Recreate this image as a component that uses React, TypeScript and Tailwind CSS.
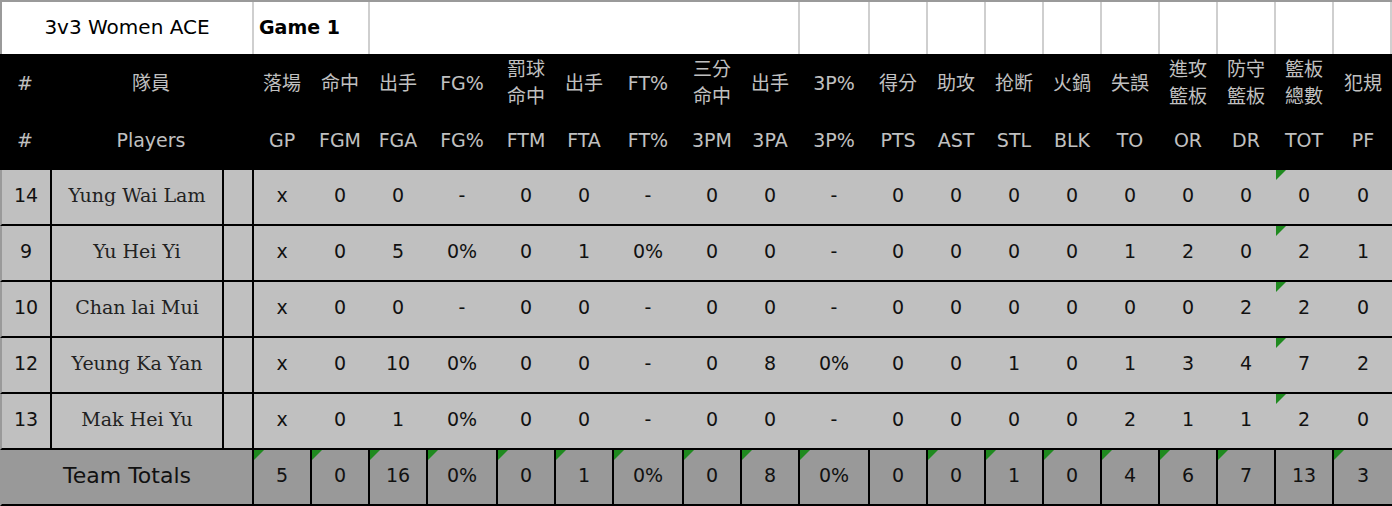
import React from "react";

type Col = { zh: string | string[]; en: string; w: string };

const cols: Col[] = [
  { zh: "落場", en: "GP", w: "w-[58px]" },
  { zh: "命中", en: "FGM", w: "w-[58px]" },
  { zh: "出手", en: "FGA", w: "w-[58px]" },
  { zh: "FG%", en: "FG%", w: "w-[70px]" },
  { zh: ["罰球", "命中"], en: "FTM", w: "w-[58px]" },
  { zh: "出手", en: "FTA", w: "w-[58px]" },
  { zh: "FT%", en: "FT%", w: "w-[70px]" },
  { zh: ["三分", "命中"], en: "3PM", w: "w-[58px]" },
  { zh: "出手", en: "3PA", w: "w-[58px]" },
  { zh: "3P%", en: "3P%", w: "w-[70px]" },
  { zh: "得分", en: "PTS", w: "w-[58px]" },
  { zh: "助攻", en: "AST", w: "w-[58px]" },
  { zh: "抢断", en: "STL", w: "w-[58px]" },
  { zh: "火鍋", en: "BLK", w: "w-[58px]" },
  { zh: "失誤", en: "TO", w: "w-[58px]" },
  { zh: ["進攻", "籃板"], en: "OR", w: "w-[58px]" },
  { zh: ["防守", "籃板"], en: "DR", w: "w-[58px]" },
  { zh: ["籃板", "總數"], en: "TOT", w: "w-[58px]" },
  { zh: "犯規", en: "PF", w: "w-[60px]" },
];

const players: { no: string; name: string; stats: string[] }[] = [
  { no: "14", name: "Yung Wai Lam", stats: ["x", "0", "0", "-", "0", "0", "-", "0", "0", "-", "0", "0", "0", "0", "0", "0", "0", "0", "0"] },
  { no: "9", name: "Yu Hei Yi", stats: ["x", "0", "5", "0%", "0", "1", "0%", "0", "0", "-", "0", "0", "0", "0", "1", "2", "0", "2", "1"] },
  { no: "10", name: "Chan lai Mui", stats: ["x", "0", "0", "-", "0", "0", "-", "0", "0", "-", "0", "0", "0", "0", "0", "0", "2", "2", "0"] },
  { no: "12", name: "Yeung Ka Yan", stats: ["x", "0", "10", "0%", "0", "0", "-", "0", "8", "0%", "0", "0", "1", "0", "1", "3", "4", "7", "2"] },
  { no: "13", name: "Mak Hei Yu", stats: ["x", "0", "1", "0%", "0", "0", "-", "0", "0", "-", "0", "0", "0", "0", "2", "1", "1", "2", "0"] },
];

const totals = ["5", "0", "16", "0%", "0", "1", "0%", "0", "8", "0%", "0", "0", "1", "0", "4", "6", "7", "13", "3"];

function Tri() {
  return (
    <svg className="absolute left-0 top-0" width="10" height="10" viewBox="0 0 10 10">
      <polygon points="0,0 10,0 0,10" fill="#1f8a1f" />
    </svg>
  );
}

const topCells = ["w-[70px]", "w-[58px]", "w-[58px]", "w-[58px]", "w-[58px]", "w-[58px]", "w-[58px]", "w-[58px]", "w-[58px]", "w-[58px]"];

export default function App() {
  return (
    <div className="w-[1392px] h-[506px] bg-white font-['DejaVu_Sans','Noto_Sans_CJK_TC',sans-serif] border-t-2 border-t-[#9a9a9a] overflow-hidden">
      {/* top row */}
      <div className="flex h-[52px] border-l-2 border-l-[#9a9a9a] border-r-2 border-r-[#cfcfcf] text-black">
        <div className="w-[250px] flex items-center justify-center text-[20px] pb-[2px]">3v3 Women ACE</div>
        <div className="w-[116px] border-l-2 border-l-[#cfcfcf] flex items-center pl-[5px] text-[19px] font-bold pb-[2px]">Game 1</div>
        <div className="w-[430px] border-l-2 border-l-[#cfcfcf]" />
        {topCells.map((w, i) => (
          <div key={i} className={`${w} border-l-2 border-l-[#cfcfcf]`} />
        ))}
      </div>

      {/* header: Chinese */}
      <div className="flex h-[58px] bg-black text-[#c0c0c0]">
        <div className="w-[50px] flex items-center justify-center text-[19px]">#</div>
        <div className="w-[202px] flex items-center justify-center text-[19px]">隊員</div>
        {cols.map((c, i) => (
          <div key={i} className={`${c.w} border-l-2 border-l-transparent flex flex-col items-center justify-center text-[19px] leading-[27px]`}>
            {Array.isArray(c.zh) ? c.zh.map((z, j) => <span key={j}>{z}</span>) : <span>{c.zh}</span>}
          </div>
        ))}
      </div>
      {/* header: English */}
      <div className="flex h-[58px] bg-black text-[#c0c0c0]">
        <div className="w-[50px] flex items-center justify-center text-[19px] pb-[2px]">#</div>
        <div className="w-[202px] flex items-center justify-center text-[19px] pb-[2px]">Players</div>
        {cols.map((c, i) => (
          <div key={i} className={`${c.w} border-l-2 border-l-transparent flex items-center justify-center text-[19px] pb-[2px]`}>
            {c.en}
          </div>
        ))}
      </div>

      {/* players */}
      {players.map((p, r) => (
        <div key={r} className="flex h-[56px] bg-[#c0c0c0] border-b-2 border-b-black border-l-2 border-l-[#9a9a9a] text-[#111]">
          <div className="w-[48px] flex items-center justify-center text-[19px] pb-[3px]">{p.no}</div>
          <div className="w-[172px] border-l-2 border-l-black flex items-center justify-center text-[19px] text-[#222] font-['DejaVu_Serif',serif] pb-[4px]">
            {p.name}
          </div>
          <div className="w-[30px] border-l-2 border-l-black" />
          {p.stats.map((s, i) => (
            <div
              key={i}
              className={`${cols[i].w} relative border-l-2 ${i === 0 ? "border-l-black" : "border-l-transparent"} flex items-center justify-center text-[19px] pb-[3px]`}
            >
              {i === 17 && <Tri />}
              {s}
            </div>
          ))}
        </div>
      ))}

      {/* totals */}
      <div className="flex h-[56px] bg-[#999999] border-b-2 border-b-black border-l-2 border-l-[#999999] text-[#111]">
        <div className="w-[250px] flex items-center justify-center text-[22px] pb-[4px]">Team Totals</div>
        {totals.map((s, i) => (
          <div key={i} className={`${cols[i].w} relative border-l-2 border-l-black flex items-center justify-center text-[19px] pb-[3px]`}>
            {i !== 10 && i !== 17 && <Tri />}
            {s}
          </div>
        ))}
      </div>
    </div>
  );
}
